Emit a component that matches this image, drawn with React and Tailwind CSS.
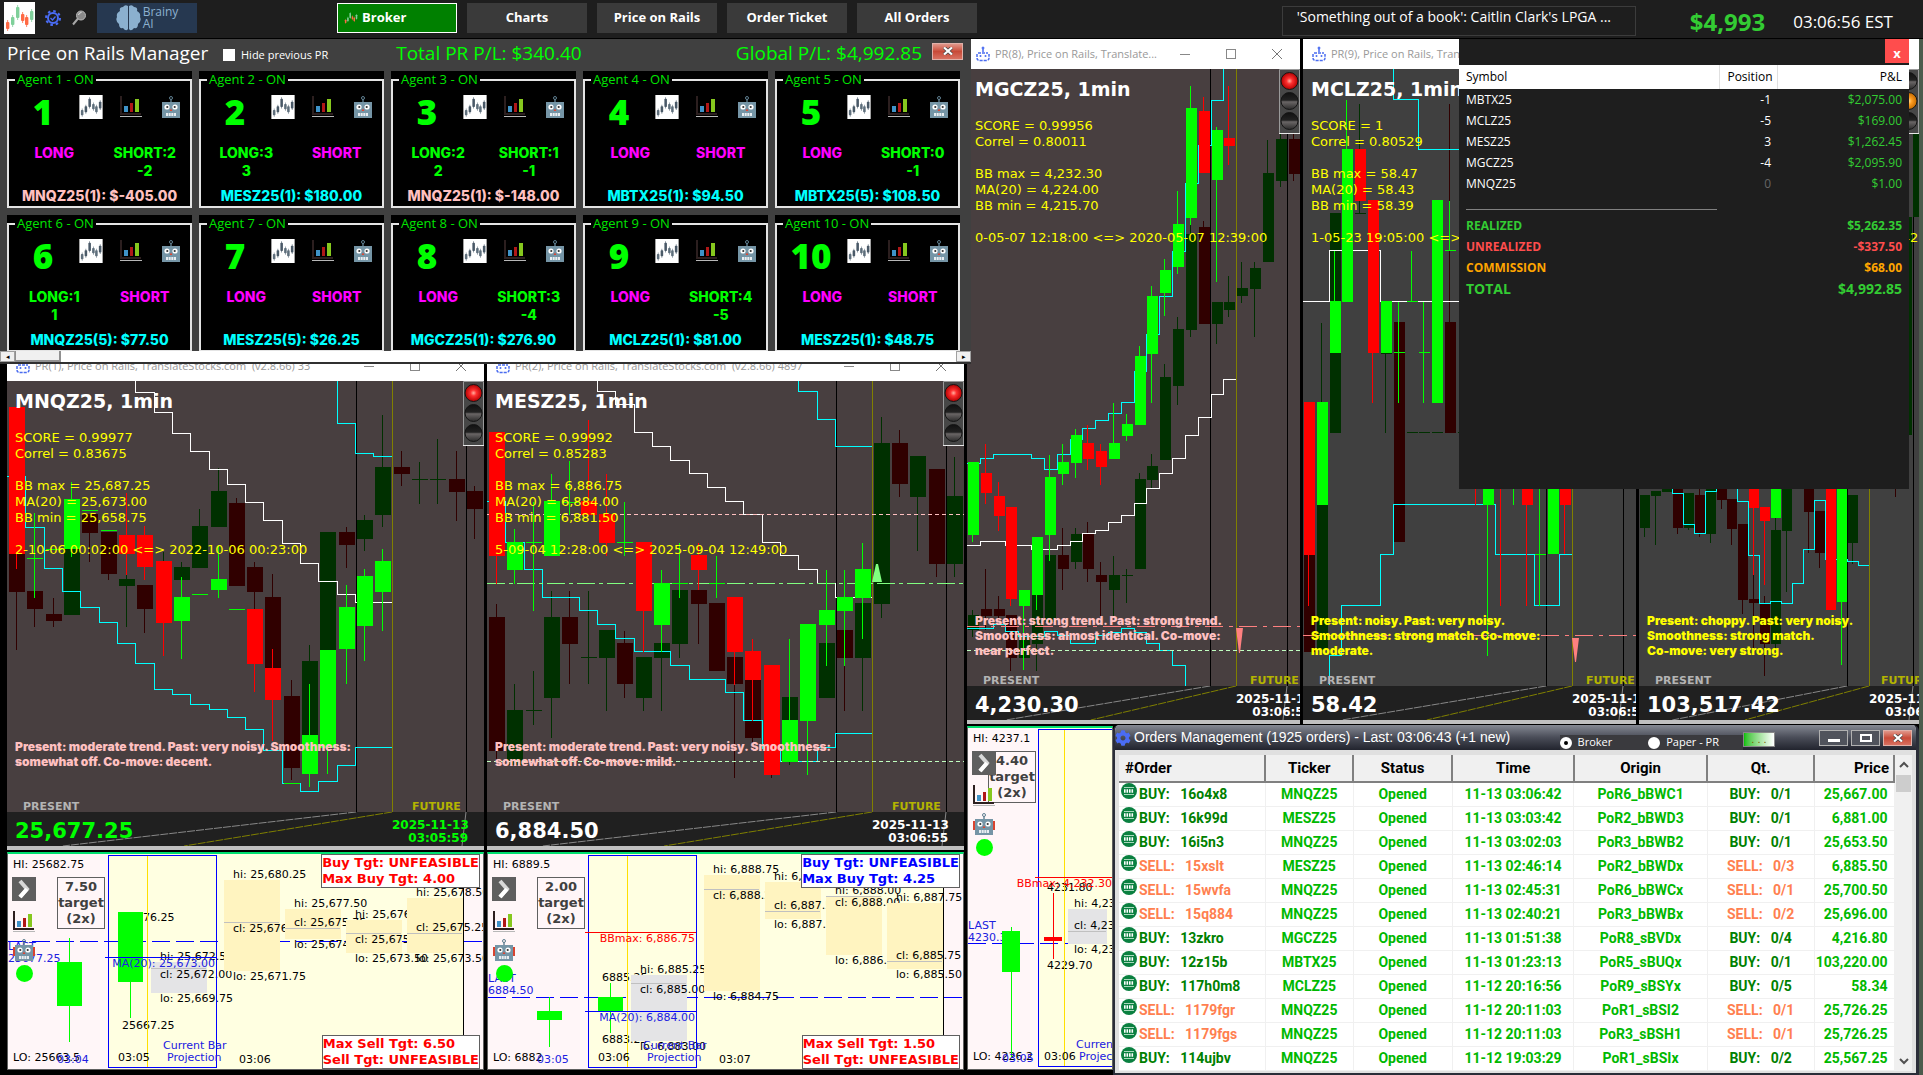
import React, { useState } from "react";
import { FaCog } from "react-icons/fa";

const PAST_UP = "#003000";
const PAST_DOWN = "#300000";
const UP = "#00ff00";
const DOWN = "#ff0000";

const TABS = ["Broker", "Charts", "Price on Rails", "Order Ticket", "All Orders"];

const AGENTS = [
  { id: 1, long: "LONG", short: "SHORT:2", longQty: "", shortQty: "-2", pl: "MNQZ25(1): $-405.00", loss: true },
  { id: 2, long: "LONG:3", short: "SHORT", longQty: "3", shortQty: "", pl: "MESZ25(1): $180.00" },
  { id: 3, long: "LONG:2", short: "SHORT:1", longQty: "2", shortQty: "-1", pl: "MNQZ25(1): $-148.00", loss: true },
  { id: 4, long: "LONG", short: "SHORT", longQty: "", shortQty: "", pl: "MBTX25(1): $94.50" },
  { id: 5, long: "LONG", short: "SHORT:0", longQty: "", shortQty: "-1", pl: "MBTX25(5): $108.50" },
  { id: 6, long: "LONG:1", short: "SHORT", longQty: "1", shortQty: "", pl: "MNQZ25(5): $77.50" },
  { id: 7, long: "LONG", short: "SHORT", longQty: "", shortQty: "", pl: "MESZ25(5): $26.25" },
  { id: 8, long: "LONG", short: "SHORT:3", longQty: "", shortQty: "-4", pl: "MGCZ25(1): $276.90" },
  { id: 9, long: "LONG", short: "SHORT:4", longQty: "", shortQty: "-5", pl: "MCLZ25(1): $81.00" },
  { id: 10, long: "LONG", short: "SHORT", longQty: "", shortQty: "", pl: "MESZ25(1): $48.75" },
];

const POSITIONS = [
  ["MBTX25", "-1", "$2,075.00"],
  ["MCLZ25", "-5", "$169.00"],
  ["MESZ25", "3", "$1,262.45"],
  ["MGCZ25", "-4", "$2,095.90"],
  ["MNQZ25", "0", "$1.00"],
];

const ORDERS = [
  ["BUY", "16o4x8", "MNQZ25", "11-13 03:06:42", "PoR6_bBWC1", "0/1", "25,667.00"],
  ["BUY", "16k99d", "MESZ25", "11-13 03:03:42", "PoR2_bBWD3", "0/1", "6,881.00"],
  ["BUY", "16i5n3", "MNQZ25", "11-13 03:02:03", "PoR3_bBWB2", "0/1", "25,653.50"],
  ["SELL", "15xslt", "MESZ25", "11-13 02:46:14", "PoR2_bBWDx", "0/3", "6,885.50"],
  ["SELL", "15wvfa", "MNQZ25", "11-13 02:45:31", "PoR6_bBWCx", "0/1", "25,700.50"],
  ["SELL", "15q884", "MNQZ25", "11-13 02:40:21", "PoR3_bBWBx", "0/2", "25,696.00"],
  ["BUY", "13zkro", "MGCZ25", "11-13 01:51:38", "PoR8_sBVDx", "0/4", "4,216.80"],
  ["BUY", "12z15b", "MBTX25", "11-13 01:23:13", "PoR5_sBUQx", "0/1", "103,220.00"],
  ["BUY", "117h0m8", "MCLZ25", "11-12 20:16:56", "PoR9_sBSYx", "0/5", "58.34"],
  ["SELL", "1179fgr", "MNQZ25", "11-12 20:11:03", "PoR1_sBSI2", "0/1", "25,726.25"],
  ["SELL", "1179fgs", "MNQZ25", "11-12 20:11:03", "PoR3_sBSH1", "0/1", "25,726.25"],
  ["BUY", "114ujbv", "MNQZ25", "11-12 19:03:29", "PoR1_sBSIx", "0/2", "25,567.25"],
];

// candles are [index, high, bodyTop, bodyBottom, low]; steps are [firstIndex, startY, ...levels]
const CHARTS = {
  mnq: {
    title: "PR(1), Price on Rails, TranslateStocks.com  (v2.8.66) 33",
    symbol: "MNQZ25, 1min",
    info: ["SCORE = 0.99977", "Correl = 0.83675", "", "BB max = 25,687.25", "MA(20) = 25,673.00", "BB min = 25,658.75", "", "2-10-06 00:02:00 <=> 2022-10-06 00:23:00"],
    note: ["Present: moderate trend. Past: very noisy. Smoothness:", "somewhat off. Co-move: decent."],
    price: "25,677.25",
    time: "03:05:59",
    pitch: 18.32,
    first: 2,
    body: 16,
    now: 349,
    future: 385,
    end: 459,
    futureLabel: 405,
    fresh: true,
    pastUp: [
      [3, 168, 168, 234, 234], [6, 194, 198, 205, 246], [8, 171, 180, 190, 190], [9, 181, 186, 199, 199],
      [10, 128, 145, 187, 187], [11, 87, 110, 146, 146], [16, 264, 280, 354, 354], [17, 151, 151, 269, 269],
      [19, 134, 139, 158, 170], [20, 34, 86, 134, 146], [22, 81, 98, 98, 123], [23, 58, 98, 98, 123],
    ],
    pastDown: [
      [0, 173, 173, 211, 269], [1, 210, 210, 228, 246], [2, 217, 233, 240, 246], [4, 133, 133, 152, 181],
      [5, 151, 151, 193, 199], [7, 204, 204, 228, 252], [12, 117, 122, 205, 205], [13, 181, 186, 211, 228],
      [14, 193, 216, 287, 287], [15, 299, 315, 387, 399], [18, 146, 151, 164, 187], [21, 70, 86, 93, 105],
      [24, 70, 98, 111, 140], [25, 105, 110, 128, 158],
    ],
    up: [
      [1, 132, 177, 177, 217], [2, 168, 168, 168, 168], [3, 101, 118, 168, 176], [4, 129, 129, 129, 129],
      [5, 149, 149, 149, 149], [9, 196, 216, 240, 278], [10, 213, 213, 213, 213], [11, 165, 198, 209, 217],
      [12, 228, 228, 228, 228], [15, 402, 402, 402, 402], [16, 303, 354, 393, 406], [17, 269, 269, 367, 393],
      [18, 204, 226, 268, 303], [19, 188, 195, 245, 280], [20, 168, 180, 211, 250],
    ],
    down: [
      [0, 26, 26, 173, 188], [6, 112, 154, 173, 194], [7, 145, 154, 186, 199], [8, 180, 180, 242, 275],
      [13, 228, 228, 283, 311], [14, 268, 287, 319, 360],
    ],
    cyan: [
      [0, 95, 95, 146, 187, 210, 226, 241, 262, 282, 308, 313, 323, 328, 336, 348, 369, 402, 410, 400, 384, 366, 366],
      [18, 0, 42, 72, 75],
    ],
    white: [[7, 0, 11, 31, 52, 70, 88, 103, 121, 139, 162, 182, 200, 213, 221, 221]],
    levels: [],
  },
  mes: {
    title: "PR(2), Price on Rails, TranslateStocks.com  (v2.8.66) 4897",
    symbol: "MESZ25, 1min",
    info: ["SCORE = 0.99992", "Correl = 0.85283", "", "BB max = 6,886.75", "MA(20) = 6,884.00", "BB min = 6,881.50", "", "5-09-04 12:28:00 <=> 2025-09-04 12:49:00"],
    note: ["Present: moderate trend. Past: very noisy. Smoothness:", "somewhat off. Co-move: mild."],
    price: "6,884.50",
    time: "03:06:55",
    pitch: 18.32,
    first: 2,
    body: 16,
    now: 349,
    future: 385,
    end: 459,
    futureLabel: 405,
    pastUp: [
      [1, 303, 329, 384, 384], [2, 290, 329, 329, 344], [3, 210, 236, 317, 357], [5, 210, 276, 276, 303],
      [6, 249, 249, 277, 330], [8, 276, 276, 317, 330], [9, 262, 262, 277, 330], [10, 209, 209, 263, 277],
      [16, 316, 316, 339, 384], [18, 262, 262, 317, 317], [20, 222, 222, 277, 330], [21, 36, 62, 223, 237],
      [23, 75, 75, 116, 170], [25, 76, 115, 183, 196],
    ],
    pastDown: [
      [0, 223, 236, 370, 379], [4, 210, 236, 263, 303], [7, 250, 262, 303, 317], [11, 209, 209, 223, 263],
      [12, 222, 222, 290, 290], [13, 276, 276, 303, 397], [14, 299, 299, 357, 370], [15, 380, 380, 390, 397],
      [19, 249, 249, 277, 330], [22, 49, 62, 103, 116], [24, 88, 88, 183, 196],
    ],
    up: [
      [1, 148, 161, 189, 203], [2, 121, 161, 161, 230], [3, 93, 120, 175, 175], [4, 80, 121, 121, 134],
      [7, 121, 161, 161, 175], [9, 189, 202, 244, 271], [10, 162, 202, 202, 217], [12, 175, 202, 202, 217],
      [16, 258, 339, 381, 381], [17, 243, 243, 340, 394], [18, 189, 229, 244, 285], [19, 189, 216, 230, 285],
      [20, 162, 188, 217, 258],
    ],
    down: [
      [0, 51, 51, 175, 203], [5, 39, 120, 134, 134], [6, 93, 133, 162, 175], [8, 161, 161, 230, 271],
      [11, 162, 174, 189, 209], [13, 216, 216, 271, 304], [14, 258, 270, 299, 340], [15, 284, 284, 394, 394],
    ],
    cyan: [
      [0, 120, 120, 161, 188, 216, 216, 229, 243, 257, 270, 270, 284, 298, 298, 311, 339, 367, 380, 380, 366, 352, 352],
      [17, 0, 10, 38, 65, 65],
    ],
    white: [[6, 0, 10, 23, 51, 65, 79, 92, 106, 120, 133, 161, 174, 188, 202, 216, 216]],
    levels: [
      [133, "#ffc0c0", "4 3"],
      [202, "#80ff80", "18 4 4 4"],
      [380, "#c0ffc0", "4 3"],
    ],
    marker: { points: "385,201 389,183 391,183 395,201", color: "#80ff80" },
  },
  mgc: {
    title: "PR(8), Price on Rails, Translate...",
    symbol: "MGCZ25, 1min",
    info: ["SCORE = 0.99956", "Correl = 0.80011", "", "BB max = 4,232.30", "MA(20) = 4,224.00", "BB min = 4,215.70", "", "0-05-07 12:18:00 <=> 2020-05-07 12:39:00"],
    note: ["Present: strong trend. Past: strong trend.", "Smoothness: almost identical. Co-move:", "near perfect."],
    price: "4,230.30",
    time: "03:06:56",
    pitch: 12.82,
    first: 1,
    body: 11,
    now: 243,
    future: 269,
    end: 320,
    futureLabel: 283,
    pastUp: [
      [0, 541, 546, 561, 568], [4, 567, 567, 589, 589], [5, 526, 526, 575, 602], [6, 486, 486, 553, 553],
      [8, 459, 465, 493, 500], [11, 487, 506, 521, 548], [12, 500, 506, 506, 534], [13, 404, 410, 500, 500],
      [14, 385, 397, 411, 419], [15, 295, 308, 391, 391], [16, 248, 260, 317, 336], [17, 156, 165, 261, 268],
      [19, 233, 233, 255, 275], [20, 207, 233, 241, 248], [21, 193, 219, 227, 234], [22, 193, 199, 220, 268],
      [23, 71, 104, 193, 193], [24, 64, 70, 112, 118],
    ],
    pastDown: [
      [1, 500, 540, 547, 561], [2, 527, 540, 547, 551], [3, 546, 546, 589, 602], [7, 459, 486, 500, 521],
      [9, 453, 465, 500, 513], [10, 493, 506, 513, 548], [18, 152, 158, 255, 255], [25, 64, 70, 105, 112],
    ],
    up: [
      [0, 393, 393, 466, 473], [4, 521, 521, 537, 601], [5, 468, 468, 526, 541], [6, 386, 408, 466, 492],
      [7, 375, 393, 405, 416], [8, 360, 366, 394, 409], [11, 334, 374, 390, 390], [12, 345, 355, 367, 372],
      [13, 277, 287, 356, 356], [14, 217, 227, 285, 334], [15, 190, 201, 224, 247], [16, 122, 155, 198, 205],
      [17, 17, 39, 149, 156], [19, 58, 61, 111, 213],
    ],
    down: [
      [1, 375, 404, 424, 435], [2, 413, 427, 447, 462], [3, 438, 438, 530, 537], [9, 356, 374, 390, 401],
      [10, 375, 382, 398, 416], [18, 28, 42, 104, 104], [20, 17, 69, 77, 96],
    ],
    cyan: [
      [0, 394, 394, 389, 385, 385, 385, 389, 400, 385, 370, 359, 351, 344, 333, 302, 265, 227, 182, 114, 76, 31, -1],
      [0, 559, 559, 559, 555, 562, 567, 567, 562, 566, 574, 574, 566, 563, 559, 563, 574, 581, 596, 618],
    ],
    white: [[0, 476, 476, 472, 472, 476, 476, 480, 480, 476, 472, 464, 461, 453, 446, 434, 419, 404, 389, 366, 348, 325, 310]],
    levels: [
      [557, "#ff8080", "18 6 4 6"],
      [581, "#c0ffc0", "4 3"],
    ],
    marker: { points: "269,559 276,559 273,584 272,584", color: "#ff8080" },
  },
  mcl: {
    title: "PR(9), Price on Rails, Translate...",
    symbol: "MCLZ25, 1min",
    info: ["SCORE = 1", "Correl = 0.80529", "", "BB max = 58.47", "MA(20) = 58.43", "BB min = 58.39", "", "1-05-23 19:05:00 <=> 2021-05-23 19:26:00"],
    note: ["Present: noisy. Past: very noisy.", "Smoothness: strong match. Co-move:", "moderate."],
    price: "58.42",
    time: "03:06:56",
    pitch: 12.82,
    first: 1,
    body: 11,
    now: 243,
    future: 269,
    end: 320,
    futureLabel: 283,
    neutral: true,
    pastUp: [
      [1, 254, 436, 581, 581], [2, 144, 144, 364, 364], [4, 35, 144, 144, 144], [6, 284, 284, 285, 364],
      [8, 363, 363, 363, 363], [9, 363, 363, 363, 363], [10, 363, 363, 363, 363], [12, 363, 363, 363, 363],
    ],
    pastDown: [[0, 486, 486, 583, 583], [7, 253, 253, 473, 473], [11, 35, 253, 364, 364]],
    up: [
      [1, 333, 333, 436, 436], [2, 182, 232, 284, 284], [3, 31, 80, 233, 233], [6, 232, 232, 284, 284],
      [7, 233, 283, 283, 334], [8, 182, 232, 232, 232], [9, 233, 283, 283, 334], [10, 131, 131, 334, 334],
      [11, 132, 181, 181, 181], [14, 380, 380, 436, 587], [16, 380, 380, 380, 436], [18, 380, 485, 485, 537],
      [19, 380, 380, 485, 485],
    ],
    down: [
      [0, 333, 333, 486, 537], [4, 80, 80, 132, 132], [5, 131, 131, 284, 334], [13, 380, 380, 380, 436],
      [15, 380, 380, 380, 537], [17, 380, 380, 436, 537], [20, 380, 380, 436, 485],
    ],
    cyan: [
      [7, 0, 30, 30, 80, 80, 80, 80],
      [2, 616, 586, 536, 536, 536, 485, 435, 435, 435, 435, 435, 435, 435, 435, 485, 485, 485, 536, 536, 485],
    ],
    white: [[0, 232, 232, 232, 181, 181, 181, 181, 232, 232, 232, 232, 232, 232, 232]],
    levels: [[566, "#ff8080", "18 6 4 6"]],
    marker: { points: "269,569 276,569 273,593 272,593", color: "#ff8080" },
  },
  mbt: {
    title: "PR(10), Price on Rails, Translate...",
    symbol: "MBTX25, 1min",
    info: ["SCORE = 0.99981", "Correl = 0.81204", "", "BB max = 103,590", "MA(20) = 103,535", "BB min = 103,480", "", "3-02-14 08:21:00 <=> 2023-02-14 08:42:00"],
    note: ["Present: choppy. Past: very noisy.", "Smoothness: strong match.", "Co-move: very strong."],
    price: "103,517.42",
    time: "03:06:56",
    pitch: 10.93,
    first: 1,
    body: 10,
    now: 208,
    future: 230,
    end: 274,
    futureLabel: 242,
    neutral: true,
    amber: true,
    pastUp: [
      [0, 426, 426, 459, 468], [1, 422, 422, 427, 476], [2, 414, 414, 423, 423], [4, 424, 424, 459, 461],
      [6, 414, 414, 465, 474], [12, 449, 461, 575, 581], [13, 414, 414, 462, 523], [19, 426, 426, 474, 495],
      [24, 148, 148, 366, 366], [25, 65, 65, 148, 148],
    ],
    pastDown: [
      [3, 414, 414, 459, 465], [5, 414, 426, 464, 468], [7, 414, 414, 431, 440], [8, 430, 430, 460, 476],
      [9, 455, 455, 531, 545], [10, 506, 530, 534, 581], [11, 527, 534, 575, 607], [15, 414, 414, 443, 484],
      [16, 442, 442, 484, 499], [23, 400, 400, 410, 428],
    ],
    up: [[12, 414, 414, 449, 449], [18, 414, 414, 533, 596]],
    down: [[10, 414, 414, 439, 506], [11, 438, 438, 452, 516], [17, 414, 414, 541, 541]],
    cyan: [
      [3, 400, 424, 455, 464, 422, 400, 400, 432, 486, 534, 532, 534, 514, 480, 431, 490, 490, 492, 496],
    ],
    white: [],
    levels: [],
  },
};

const SLOT_X = [217, 278, 339, 400];

const PROJECTIONS = {
  mnq: {
    hi: "HI: 25682.75",
    lo: "LO: 25663.5",
    target: "7.50",
    last: ["25677.25", 98, 89],
    prev: { x: 50, w: 25, high: 86, top: 110, bottom: 154, low: 190, color: UP, time: "03:04" },
    cur: { x: 111, w: 25, high: 60, top: 60, bottom: 130, low: 166, color: UP, time: "03:05" },
    curHigh: ["25676.25", 69],
    curLow: ["25667.25", 177],
    box: [101, 108, 140],
    ma: ["MA(20): 25,673.00", 105, 115],
    gray: { x: 144, w: 56, top: 110, bottom: 141, close: 116, hi: "hi: 25,672.5", cl: "cl: 25,672.00", lo: "lo: 25,669.75", text: [108, 126, 150] },
    slots: [
      { top: 28, bottom: 119, close: 70, hi: "hi: 25,680.25", cl: "cl: 25,676.25", lo: "lo: 25,671.75", text: [26, 80, 128] },
      { top: 57, bottom: 87, close: 76, hi: "hi: 25,677.50", cl: "cl: 25,675.75", lo: "lo: 25,674.75", text: [55, 74, 96] },
      { top: 68, bottom: 101, close: 81, hi: "hi: 25,676.50", cl: "cl: 25,675.25", lo: "lo: 25,673.50", text: [66, 91, 110] },
      { top: 46, bottom: 101, close: 81, hi: "hi: 25,678.50", cl: "cl: 25,675.25", lo: "lo: 25,673.50", text: [44, 79, 110] },
    ],
    next: "03:06",
    buy: ["Buy Tgt: UNFEASIBLE", "Max Buy Tgt: 4.00"],
    sell: ["Max Sell Tgt: 6.50", "Sell Tgt: UNFEASIBLE"],
    height: 218,
  },
  mes: {
    hi: "HI: 6889.5",
    lo: "LO: 6882",
    target: "2.00",
    last: ["6884.50", 130, 145],
    prev: { x: 50, w: 25, high: 145, top: 159, bottom: 168, low: 195, color: UP, time: "03:05" },
    cur: { x: 111, w: 25, high: 131, top: 145, bottom: 159, low: 181, color: UP, time: "03:06" },
    curHigh: ["6885.25", 129],
    curLow: ["6883.25", 191],
    box: [101, 108, 140],
    bb: ["BBmax: 6,886.75", 80, 90],
    ma: ["MA(20): 6,884.00", 159, 169],
    gray: { x: 144, w: 56, top: 123, bottom: 189, close: 131, hi: "hi: 6,885.25", cl: "cl: 6,885.00", lo: "lo: 6,883.00", text: [121, 141, 198] },
    slots: [
      { top: 23, bottom: 139, close: 37, hi: "hi: 6,888.75", cl: "cl: 6,888.25", lo: "lo: 6,884.75", text: [21, 47, 148] },
      { top: 30, bottom: 67, close: 59, hi: "hi: 6,888.50", cl: "cl: 6,887.50", lo: "lo: 6,887.25", text: [28, 57, 76] },
      { top: 44, bottom: 103, close: 44, hi: "hi: 6,888.00", cl: "cl: 6,888.00", lo: "lo: 6,886.00", text: [42, 54, 112] },
      { top: 51, bottom: 117, close: 109, hi: "hi: 6,887.75", cl: "cl: 6,885.75", lo: "lo: 6,885.50", text: [49, 107, 126] },
    ],
    next: "03:07",
    buy: ["Buy Tgt: UNFEASIBLE", "Max Buy Tgt: 4.25"],
    sell: ["Max Sell Tgt: 1.50", "Sell Tgt: UNFEASIBLE"],
    buyBlue: true,
    height: 218,
  },
  mgc: {
    hi: "HI: 4237.1",
    lo: "LO: 4226.2",
    target: "4.40",
    last: ["4230.30", 203, 217],
    prev: { x: 35, w: 18, high: 201, top: 205, bottom: 246, low: 331, color: UP, time: "03:05" },
    cur: { x: 77, w: 18, high: 167, top: 211, bottom: 215, low: 233, color: DOWN, time: "03:06" },
    curHigh: ["4231.80", 165],
    curLow: ["4229.70", 243],
    box: [71, 108, 97],
    bb: ["BBmax: 4,232.30", 151, 161],
    gray: { x: 101, w: 39, top: 183, bottom: 218, close: 205, hi: "hi: 4,231.40", cl: "cl: 4,230.40", lo: "lo: 4,230.00", text: [181, 203, 227] },
    slots: [],
    narrow: true,
    height: 343,
  },
};

function CandlesIcon({ className, up, down, bg }) {
  const bars = [
    [2, 20, 27, down], [7, 15, 23, up], [12, 5, 16, up], [17, 12, 19, down], [21, 15, 23, down], [26, 9, 18, up],
  ];
  return (
    <svg className={className} viewBox="0 0 31 32" aria-hidden="true">
      <rect width="31" height="32" fill={bg} />
      {bars.map(([x, top, bottom, color]) => (
        <g key={x} fill={color}>
          <rect x={x} y={top} width="3.4" height={bottom - top} rx="1" />
          <rect x={x + 1.3} y={top - 2} width="0.8" height={bottom - top + 4} />
        </g>
      ))}
    </svg>
  );
}

function BarsIcon({ className }) {
  return (
    <svg className={className} viewBox="0 0 22 22" aria-hidden="true">
      <path d="M1 0V18H21" fill="none" stroke="#2c1f1f" strokeWidth="2" />
      <rect x="4" y="10" width="4" height="6" fill="#3f93c8" />
      <rect x="10" y="7" width="3" height="9" fill="#b01818" />
      <rect x="15" y="3" width="4" height="13" fill="#86c81e" />
      <rect x="0" y="20" width="22" height="1" fill="#b8b8b8" />
    </svg>
  );
}

function RobotIcon({ className, ears }) {
  return (
    <svg className={className} viewBox="0 0 22 22" aria-hidden="true">
      {ears && <rect x="0" y="8" width="22" height="9" fill="#d8432f" />}
      <circle cx="11" cy="2" r="1.5" fill="none" stroke="#5f7f90" />
      <path d="M11 3V6" stroke="#5f7f90" strokeWidth="1.4" />
      <rect x="2" y="6" width="18" height="16" fill="#7595a6" />
      <circle cx="7" cy="11" r="2.6" fill="#fff" />
      <circle cx="15" cy="11" r="2.6" fill="#fff" />
      <circle cx="7.3" cy="11" r="1.1" fill="#333" />
      <circle cx="14.7" cy="11" r="1.1" fill="#333" />
      <path d="M11 12.5l1.4 2.4H9.600z" fill="#e0442f" />
      <rect x="6" y="17" width="10" height="3" fill="#e8eef2" />
      <path d="M8.500 17V20M11 17V20M13.500 17V20" stroke="#7595a6" strokeWidth="0.600" />
    </svg>
  );
}

function WindowIcon() {
  return (
    <svg className="h-4 w-4 shrink-0" viewBox="0 0 16 16" fill="none" stroke="#4a6cf0" aria-hidden="true">
      <circle cx="8" cy="2" r="1" fill="#4a6cf0" />
      <path d="M8 3V6" strokeWidth="1.500" />
      <path d="M3 7h10M2 8v4q0 2.500 3 2.500h6q3 0 3-2.500V8" strokeWidth="1.500" strokeDasharray="3 1" />
      <circle cx="5.500" cy="10" r="1" fill="#4a6cf0" stroke="none" />
      <circle cx="10.500" cy="10" r="1" fill="#4a6cf0" stroke="none" />
    </svg>
  );
}

function RedClose({ className }) {
  return (
    <button
      aria-label="Close"
      className={`${className} flex items-center justify-center border border-[#e0b0a8] bg-gradient-to-b from-[#e0968a] via-[#c84a38] to-[#d87060]`}
    >
      <svg className="h-2 w-3" viewBox="0 0 12 8" aria-hidden="true">
        <path d="M2 0.500L10 7.500M10 0.500L2 7.500" stroke="#444" strokeWidth="3.600" />
        <path d="M2 0.500L10 7.500M10 0.500L2 7.500" stroke="#fff" strokeWidth="2.200" />
      </svg>
    </button>
  );
}

function TopBar() {
  const [tab, setTab] = useState("Broker");
  return (
    <header className="flex h-[39px] shrink-0 items-start border-b border-black bg-[#1e1e1e] pl-1 font-['Open_Sans',sans-serif]">
      <CandlesIcon className="mt-0.5 h-8 w-[31px]" up="#7fd09a" down="#ff6a45" bg="#fff" />
      <button aria-label="Settings" className="mt-2.5 ml-2.5">
        <svg className="h-4 w-4" viewBox="0 0 16 16" aria-hidden="true">
          <circle cx="8" cy="8" r="5" fill="none" stroke="#4a6cf5" strokeWidth="2" />
          <circle cx="8" cy="8" r="7" fill="none" stroke="#4a6cf5" strokeWidth="2" strokeDasharray="2.600 2.900" />
          <path d="M5.500 8l2 2 3-3.500" fill="none" stroke="#4a6cf5" strokeWidth="1.300" />
        </svg>
      </button>
      <button aria-label="Search" className="mt-2.5 ml-2.5">
        <svg className="h-4 w-4" viewBox="0 0 16 16" aria-hidden="true">
          <path d="M2 14.500L7 8.500" stroke="#a8a8a8" strokeWidth="2" />
          <circle cx="10" cy="5.500" r="4.500" fill="#8a8a8a" stroke="#b8b8b8" />
          <path d="M7.500 5a3 3 0 0 1 3-2.500" stroke="#e0e0e0" fill="none" />
        </svg>
      </button>
      <button className="mt-[3px] ml-2.5 flex h-[30px] w-[100px] items-center justify-center gap-0.5 bg-[#263850] text-left text-[12px] leading-3 text-[#8bb0cf]">
        <svg className="h-[26px] w-[25px]" viewBox="0 0 25 26" fill="#8bb0cf" aria-hidden="true">
          <path d="M12 1Q9-1 7 2Q3 2 4 6Q0 8 1 12Q-1 16 3 19Q3 24 7 23Q10 27 12 24Z" />
          <path d="M13 1Q16-1 18 2Q22 2 21 6Q25 8 24 12Q26 16 22 19Q22 24 18 23Q15 27 13 24Z" />
        </svg>
        <span>
          Brainy
          <br />
          AI
        </span>
      </button>
      <nav className="mt-[3px] ml-[140px] flex gap-2.5">
        {TABS.map((name) => (
          <button
            key={name}
            onClick={() => setTab(name)}
            className={`flex h-[30px] w-[120px] items-center gap-1 text-[13px] font-bold text-white ${
              tab === name ? "border border-white bg-[#008000] pl-1.5" : "justify-center bg-[#3a3a3a]"
            }`}
          >
            {tab === name && <CandlesIcon className="h-4 w-3.5" up="#7fd09a" down="#ff6a45" bg="transparent" />}
            {name}
          </button>
        ))}
      </nav>
      <div className="mt-1.5 ml-auto h-[30px] w-[354px] border border-[#3c3c3c] pt-0.5 pl-3.5 text-[14px] leading-4 text-white">
        'Something out of a book': Caitlin Clark's LPGA ...
      </div>
      <span className="mt-1.5 ml-[54px] text-[24px] leading-8 font-bold text-[#33cc33]">$4,993</span>
      <span className="mt-1.5 mr-[30px] ml-[28px] text-[17px] leading-8 text-white">03:06:56 EST</span>
    </header>
  );
}

function AgentCard({ agent }) {
  const side = (label) => (label.includes(":") ? "text-[#00ff00]" : "text-[#ff00ff]");
  return (
    <div className="h-[137px] bg-black">
      <fieldset className="h-full border-2 border-[#e4e4e4]">
        <legend className="ml-1.5 px-0.5 font-['Open_Sans',sans-serif] text-[13px] leading-[17px] text-[#00e400]">
          Agent {agent.id} - ON
        </legend>
        <div className="flex h-9 pt-[7px] pl-1">
          <div className="w-[60px] text-center font-['Open_Sans',sans-serif] text-[35px] leading-[34px] font-extrabold text-[#00ff00]">
            {agent.id}
          </div>
          <button aria-label="Chart" className="ml-1.5 h-6 w-6">
            <CandlesIcon className="h-6 w-6" up="#4a5a68" down="#5f6f7c" bg="#fff" />
          </button>
          <button aria-label="Statistics" className="ml-[17px] h-6 w-[22px]">
            <BarsIcon className="h-[22px] w-[22px]" />
          </button>
          <button aria-label="Robot" className="ml-[18px] h-6 w-[22px]">
            <RobotIcon className="h-[22px] w-[22px]" />
          </button>
        </div>
        <div className="mt-5 grid grid-cols-2 text-center font-['Inter',sans-serif] text-[14px] leading-[18px] font-extrabold text-[#00ff00]">
          <div className={side(agent.long)}>{agent.long}</div>
          <div className={side(agent.short)}>{agent.short}</div>
          <div className="h-[18px]">{agent.longQty}</div>
          <div className="h-[18px]">{agent.shortQty}</div>
        </div>
        <div
          className={`mt-[7px] text-center font-['Inter',sans-serif] text-[14px] leading-[18px] font-extrabold ${
            agent.loss ? "text-[#ffc0c0]" : "text-[#00ffff]"
          }`}
        >
          {agent.pl}
        </div>
      </fieldset>
    </div>
  );
}

function Manager() {
  return (
    <section className="relative z-10 -mr-1 shrink-0 border-b-2 border-[#303030] bg-[#404040] font-['Open_Sans',sans-serif]">
      <div className="flex h-8 items-center pr-2 pb-1 pl-[7px]">
        <h1 className="w-[216px] text-[19px] leading-7 text-white">Price on Rails Manager</h1>
        <label className="mt-1 flex items-center gap-1.5 text-[11px] text-white">
          <input type="checkbox" className="h-3 w-3 appearance-none bg-white checked:bg-gray-500" />
          Hide previous PR
        </label>
        <span className="ml-[68px] text-[19px] leading-7 text-[#00ff00]">Total PR P/L: $340.40</span>
        <span className="ml-auto text-[19px] leading-7 text-[#00ff00]">Global P/L: $4,992.85</span>
        <RedClose className="mb-1 ml-2.5 h-[17px] w-[31px]" />
      </div>
      <div className="grid h-[280px] grid-cols-5 content-start gap-[7px] overflow-hidden pr-[11px] pl-[7px]">
        {AGENTS.map((agent) => (
          <AgentCard key={agent.id} agent={agent} />
        ))}
      </div>
      <div className="flex h-[11px] bg-white">
        <button aria-label="Scroll left" className="flex w-[15px] items-center justify-center border border-[#a0a0a0] bg-[#f0f0f0] text-[7px] leading-none">
          ◂
        </button>
        <div className="h-full w-[46px] border-r-2 border-b-2 border-l border-[#909090] bg-[#f0f0f0]" />
        <button aria-label="Scroll right" className="ml-auto flex w-[15px] items-center justify-center border border-[#a0a0a0] bg-[#f0f0f0] text-[7px] leading-none">
          ▸
        </button>
      </div>
    </section>
  );
}

function Candles({ rows, color, chart }) {
  return (
    <g fill={color} shapeRendering="crispEdges">
      {rows.map(([i, high, top, bottom, low]) => {
        const x = Math.round(chart.first + chart.pitch * i);
        return (
          <g key={i}>
            <rect x={x} y={top} width={chart.body} height={Math.max(bottom - top, 1)} />
            <rect x={x + Math.floor(chart.body / 2) - 1} y={high} width="1" height={low - high} />
          </g>
        );
      })}
    </g>
  );
}

function stepPath([first, startY, ...levels], pitch) {
  let d = `M${Math.round(first * pitch)} ${startY}`;
  levels.forEach((y, n) => {
    d += `V${y}H${Math.round((first + n + 1) * pitch)}`;
  });
  return d;
}

function Steps({ rows, color, pitch }) {
  return rows.map((row, n) => (
    <path key={n} d={stepPath(row, pitch)} fill="none" stroke={color} strokeWidth="1" shapeRendering="crispEdges" />
  ));
}

function TrafficLight({ amber }) {
  return (
    <svg className="absolute top-0 right-0 h-[65px] w-[21px]" viewBox="0 0 21 65" aria-hidden="true">
      <defs>
        <linearGradient id="lamp-off" x1="0" y1="0" x2="0" y2="1">
          <stop offset="0" stopColor="#111" />
          <stop offset="0.450" stopColor="#222" />
          <stop offset="0.550" stopColor="#6a6666" />
          <stop offset="1" stopColor="#2a2a2a" />
        </linearGradient>
        <radialGradient id="lamp-red">
          <stop offset="0" stopColor="#ffb0a0" />
          <stop offset="0.350" stopColor="#ff3030" />
          <stop offset="1" stopColor="#b00000" />
        </radialGradient>
        <radialGradient id="lamp-amber">
          <stop offset="0" stopColor="#ffe0a0" />
          <stop offset="0.400" stopColor="#ff9c20" />
          <stop offset="1" stopColor="#c06800" />
        </radialGradient>
      </defs>
      <rect width="21" height="65" fill="#474747" />
      <path d="M0.500 65V0.500H20.500V65" fill="none" stroke="#9a9a9a" />
      <rect y="64" width="21" height="1" fill="#e8e8e8" />
      <circle cx="10.500" cy="12" r="8.500" fill={amber ? "url(#lamp-off)" : "url(#lamp-red)"} stroke="#151515" />
      <circle cx="10.500" cy="32" r="8.500" fill={amber ? "url(#lamp-amber)" : "url(#lamp-off)"} stroke="#151515" />
      <circle cx="10.500" cy="52" r="8.500" fill="url(#lamp-off)" stroke="#151515" />
    </svg>
  );
}

function ChartWindow({ chart, tucked }) {
  return (
    <section
      className={`flex min-w-0 flex-col overflow-hidden border-b-4 border-[#c0c0c0] ${chart.neutral ? "bg-[#404040]" : "bg-[#483f40]"}`}
    >
      <div className={`flex shrink-0 items-end overflow-hidden bg-white ${tucked ? "h-[17px]" : "h-[30px]"}`}>
        <div className="flex h-[30px] w-full shrink-0 items-center pl-2 font-['Open_Sans',sans-serif] text-[11px] text-[#999]">
          <WindowIcon />
          <span className="ml-1 flex-1 overflow-hidden whitespace-pre">{chart.title}</span>
          <button aria-label="Minimize" className="flex h-full w-[46px] items-center justify-center">
            <span className="h-px w-2.5 bg-[#888]" />
          </button>
          <button aria-label="Maximize" className="flex h-full w-[46px] items-center justify-center">
            <span className="h-2.5 w-2.5 border border-[#888]" />
          </button>
          <button aria-label="Close" className="flex h-full w-[46px] items-center justify-center">
            <svg className="h-2.5 w-2.5" viewBox="0 0 10 10" stroke="#777" aria-hidden="true">
              <path d="M0 0L10 10M10 0L0 10" />
            </svg>
          </button>
        </div>
      </div>
      <div className="relative flex-1 overflow-hidden font-['DejaVu_Sans',sans-serif] whitespace-pre">
        <svg className="absolute inset-0 h-full w-full" aria-hidden="true">
          <g stroke="#000" shapeRendering="crispEdges">
            <line x1={chart.now} x2={chart.now} y1="0" y2="100%" />
            <line x1={chart.end} x2={chart.end} y1="0" y2="100%" />
          </g>
          <Candles rows={chart.pastUp} color={PAST_UP} chart={chart} />
          <Candles rows={chart.pastDown} color={PAST_DOWN} chart={chart} />
          <Steps rows={chart.white} color="#fff" pitch={chart.pitch} />
          <Steps rows={chart.cyan} color="#00ffff" pitch={chart.pitch} />
          <line x1={chart.future} x2={chart.future} y1="0" y2="100%" stroke="#808000" shapeRendering="crispEdges" />
          {chart.levels.map(([y, color, dash]) => (
            <line key={y} x1="0" x2="100%" y1={y} y2={y} stroke={color} strokeDasharray={dash} shapeRendering="crispEdges" />
          ))}
          <Candles rows={chart.up} color={UP} chart={chart} />
          <Candles rows={chart.down} color={DOWN} chart={chart} />
          {chart.marker && <polygon points={chart.marker.points} fill={chart.marker.color} />}
        </svg>
        <div className="relative pt-2 pl-2">
          <h2 className="text-[19px] leading-6 font-bold text-white">{chart.symbol}</h2>
          <div className="mt-[17px] text-[13px] leading-4 text-[#ffff00]">
            {chart.info.map((line, n) => (
              <div key={n} className="h-4">
                {line}
              </div>
            ))}
          </div>
        </div>
        <div
          className={`absolute bottom-0 left-2 h-[73px] font-['Inter',sans-serif] text-[12px] leading-[15px] font-black ${
            chart.neutral ? "text-[#ffff00]" : "text-[#ffc0c0]"
          }`}
        >
          {chart.note.map((line) => (
            <div key={line}>{line}</div>
          ))}
        </div>
        <span className="absolute bottom-0 left-4 text-[11px] leading-[11px] font-bold text-[#b4b4b4]">PRESENT</span>
        <span className="absolute bottom-0 text-[11px] leading-[11px] font-bold text-[#b4b400]" style={{ left: chart.futureLabel }}>
          FUTURE
        </span>
        <TrafficLight amber={chart.amber} />
      </div>
      <div
        className={`relative h-[34px] shrink-0 overflow-hidden bg-[#202020] font-['DejaVu_Sans',sans-serif] font-bold ${
          chart.fresh ? "text-[#00ff00]" : "text-white"
        }`}
      >
        <svg className="absolute inset-0 h-full w-full" aria-hidden="true">
          <line x1={chart.now} y1="0" x2={chart.now * 0.16} y2="34" stroke="#888" strokeDasharray="8 1" />
          <line x1={chart.future} y1="0" x2={chart.future * 0.46} y2="34" stroke="#808000" strokeDasharray="8 1" />
          <line x1={chart.end} y1="0" x2={chart.end - 4} y2="34" stroke="#888" />
        </svg>
        <div className="relative pt-px pl-2 text-[21px] leading-9">{chart.price}</div>
        <div className="absolute top-[7px] w-[76px] text-right text-[12px] leading-[13px] whitespace-nowrap" style={{ left: chart.future }}>
          2025-11-13
          <br />
          {chart.time}
        </div>
      </div>
    </section>
  );
}

function PriceBar({ bar }) {
  const mid = bar.x + Math.floor(bar.w / 2);
  return (
    <g fill={bar.color} shapeRendering="crispEdges">
      <rect x={mid} y={bar.high} width="1" height={bar.low - bar.high} />
      <rect x={bar.x} y={bar.top} width={bar.w} height={bar.bottom - bar.top} />
    </g>
  );
}

function Forecast({ x, w, data, fill, indent }) {
  return (
    <g>
      <rect x={x} y={data.top} width={w} height={data.bottom - data.top} fill={fill} />
      <rect x={x} y={data.close} width={w - 1} height="1" fill="#c0c0c0" />
      <text x={x + indent} y={data.text[0]}>{data.hi}</text>
      <text x={x + indent} y={data.text[1]}>{data.cl}</text>
      <text x={x + indent} y={data.text[2]}>{data.lo}</text>
    </g>
  );
}

function Projection({ data }) {
  const [boxX, boxW, marker] = data.box;
  const base = data.height - 9;
  const right = boxX + boxW;
  return (
    <section className="relative min-w-0 overflow-hidden border border-t-2 border-[#606060] border-t-[#00e070] bg-[#fff6f8] font-['DejaVu_Sans',sans-serif]">
      <svg className="absolute -top-0.5 -left-px h-[350px] w-[477px]" fontSize="11">
        <rect x={boxX} y="2" width={data.narrow ? 262 : 355} height={data.height} fill="#ffffe1" />
        <line x1="1" x2="475" y1={data.last[2]} y2={data.last[2]} stroke="#00f" strokeDasharray="18 6" shapeRendering="crispEdges" />
        <g fill="#2020e0">
          <text x="1" y={data.last[1]}>LAST</text>
          <text x="1" y={data.last[1] + 12}>{data.last[0]}</text>
        </g>
        <text x="6" y="16">{data.hi}</text>
        <text x="6" y={base}>{data.lo}</text>
        <text x={data.cur.x + (data.narrow ? 3 : 4)} y={data.curHigh[1]}>{data.curHigh[0]}</text>
        <text x={data.cur.x + (data.narrow ? 3 : 4)} y={data.curLow[1]}>{data.curLow[0]}</text>
        <Forecast x={data.gray.x} w={data.gray.w} data={data.gray} fill="#e4e4e6" indent={data.narrow ? 6 : 9} />
        {data.slots.map((slot, n) => (
          <Forecast key={n} x={SLOT_X[n]} w={56} data={slot} fill="#fff4c0" indent={9} />
        ))}
        <PriceBar bar={data.prev} />
        <PriceBar bar={data.cur} />
        <g shapeRendering="crispEdges">
          <line x1={marker} x2={marker} y1="3" y2={data.height - 3} stroke="#ffe000" />
          <rect x={boxX} y="3" width={boxW} height={data.height - 6} fill="none" stroke="#00f" />
          {data.ma && <line x1={boxX - 3} x2={right} y1={data.ma[1]} y2={data.ma[1]} stroke="#00f" />}
          {data.bb && <line x1={boxX - 3} x2={right} y1={data.bb[1]} y2={data.bb[1]} stroke="#f00" />}
          {!data.narrow && <line x1="456" x2="456" y1="2" y2={data.height} stroke="#000" />}
        </g>
        {data.ma && <text x={right - 1} y={data.ma[2]} textAnchor="end" fill="#2020e0">{data.ma[0]}</text>}
        {data.bb && <text x={data.narrow ? 145 : right - 1} y={data.bb[2]} textAnchor="end" fill="#f00">{data.bb[0]}</text>}
        <g fill="#2020e0">
          <text x={data.narrow ? 109 : 156} y={base - 12}>Current Bar</text>
          <text x={data.narrow ? 112 : 160} y={base}>Projection</text>
          <text x={data.prev.x} y={base + 2}>{data.prev.time}</text>
        </g>
        <text x={data.cur.x} y={base}>{data.cur.time}</text>
        {data.next && <text x="232" y={base + 2}>{data.next}</text>}
      </svg>
      <div
        className={`absolute top-[23px] w-[48px] border border-[#606060] py-px text-center text-[13px] leading-4 font-bold text-[#404040] ${
          data.narrow ? "left-5" : "left-[49px]"
        }`}
      >
        {data.target}
        <br />
        target
        <br />
        (2x)
      </div>
      <div className="absolute top-[23px] left-1 flex w-6 flex-col items-center">
        <button aria-label="Expand" className="h-6 w-6 bg-[#5f5f5f]">
          <svg viewBox="0 0 24 24" fill="none" aria-hidden="true">
            <path d="M8 4L15 12L8 20" stroke="#d8d8d8" strokeWidth="4" />
            <path d="M15 12L8 20" stroke="#fff" strokeWidth="4" />
          </svg>
        </button>
        <BarsIcon className="mt-2.5 h-[22px] w-[22px]" />
        <RobotIcon className="mt-1.5 h-[22px] w-[22px]" ears />
        <span className="mt-1 h-[17px] w-[17px] rounded-full bg-[#00ff00]" />
      </div>
      {data.buy && (
        <div
          className={`absolute top-0 right-[3px] border border-[#606060] bg-white text-[13px] leading-4 font-bold whitespace-nowrap ${
            data.buyBlue ? "text-[#0000ff]" : "text-[#ff0000]"
          }`}
        >
          {data.buy[0]}
          <br />
          {data.buy[1]}
        </div>
      )}
      {data.sell && (
        <div className="absolute right-[3px] bottom-0 border border-[#606060] bg-white text-[13px] leading-4 font-bold whitespace-nowrap text-[#ff0000]">
          {data.sell[0]}
          <br />
          {data.sell[1]}
        </div>
      )}
    </section>
  );
}

function ProfitWindow() {
  return (
    <section className="absolute top-0 right-3.5 z-20 h-[450px] w-[450px] bg-[#1e1e1e] font-['Open_Sans',sans-serif] text-[12px] text-white">
      <div className="flex h-[26px] justify-end">
        <button aria-label="Close" className="h-6 w-6 bg-[#ff4d4d] pt-1 text-[13px] leading-none font-bold">
          x
        </button>
      </div>
      <table className="w-full table-fixed">
        <colgroup>
          <col />
          <col className="w-[58px]" />
          <col className="w-[132px]" />
        </colgroup>
        <thead>
          <tr className="h-6 bg-white text-black">
            <th className="border-r border-[#e0e0e0] pl-[7px] text-left font-normal">Symbol</th>
            <th className="border-r border-[#e0e0e0] pr-1 text-right font-normal">Position</th>
            <th className="pr-[7px] text-right font-normal">P&amp;L</th>
          </tr>
        </thead>
        <tbody>
          {POSITIONS.map(([symbol, position, profit]) => (
            <tr key={symbol} className="h-[21px]">
              <td className="pl-[7px]">{symbol}</td>
              <td className={`pr-1.5 text-right ${position === "0" ? "text-[#666]" : ""}`}>{position}</td>
              <td className="pr-[7px] text-right text-[#33cc33]">{profit}</td>
            </tr>
          ))}
          <tr className="h-[21px]">
            <td className="pr-0.5 pl-[7px]">
              <hr className="mt-2.5 border-[#808080]" />
            </td>
            <td />
            <td />
          </tr>
          <tr className="h-[21px] font-bold text-[#33cc33]">
            <td className="pl-[7px]">REALIZED</td>
            <td />
            <td className="pr-[7px] text-right">$5,262.35</td>
          </tr>
          <tr className="h-[21px] font-bold text-[#ff4d4d]">
            <td className="pl-[7px]">UNREALIZED</td>
            <td />
            <td className="pr-[7px] text-right">-$337.50</td>
          </tr>
          <tr className="h-[21px] font-bold text-[#ffa500]">
            <td className="pl-[7px]">COMMISSION</td>
            <td />
            <td className="pr-[7px] text-right">$68.00</td>
          </tr>
          <tr className="h-[21px] text-[14px] leading-5 font-bold text-[#33cc33]">
            <td className="pl-[7px]">TOTAL</td>
            <td />
            <td className="pr-[7px] text-right">$4,992.85</td>
          </tr>
        </tbody>
      </table>
    </section>
  );
}

function OpenBadge() {
  return (
    <svg className="h-4 w-4 shrink-0" viewBox="0 0 16 16" aria-hidden="true">
      <circle cx="8" cy="8" r="8" fill="#0a8040" />
      <rect x="3" y="4" width="10" height="1" fill="#a8d8bc" />
      <rect x="3" y="11" width="10" height="1" fill="#a8d8bc" />
      <path d="M3 8h10" stroke="#fff" strokeWidth="3.500" strokeDasharray="1.600 0.900" />
    </svg>
  );
}

function OrdersWindow() {
  const [source, setSource] = useState("Broker");
  const radio = "h-3 w-3 appearance-none rounded-full border-4 border-white bg-white checked:bg-black";
  const head = "h-[27px] border-r-2 border-b-2 border-[#808080] bg-[#f0f0f0] text-[15px] font-bold";
  const cell = "border-r border-[#f0f0f0]";
  return (
    <section className="min-w-0 flex-1 overflow-hidden rounded-t-md border-r-[3px] border-b-2 border-l-2 border-[#2a2d38] bg-[#e0e0e0] pb-0.5">
      <div className="flex h-[25px] items-center bg-gradient-to-b from-[#868a94] via-[#4a4d58] to-[#22242e] font-['Liberation_Sans',sans-serif] text-[14px] text-white">
        <FaCog className="mr-[3px] h-4 w-4 shrink-0 text-[#4a6cf5]" />
        <span className="whitespace-nowrap">Orders Management (1925 orders) - Last: 03:06:43 (+1 new)</span>
        <div className="mt-2.5 ml-auto flex h-[15px] items-center gap-9 bg-[#3a3a3e] pr-6 font-['Open_Sans',sans-serif] text-[11px] whitespace-nowrap">
          {["Broker", "Paper - PR"].map((name) => (
            <label key={name} className="flex items-center gap-1.5">
              <input type="radio" name="source" className={radio} checked={source === name} onChange={() => setSource(name)} />
              {name}
            </label>
          ))}
        </div>
        <button className="mt-1 flex h-[15px] w-8 items-center justify-center border border-[#888] bg-gradient-to-r from-[#00c000] to-white text-[11px] leading-none text-[#806000]">
          . . .
        </button>
        <div className="ml-11 flex gap-[3px] pr-1">
          <button aria-label="Minimize" className="flex h-4 w-[29px] items-end justify-center border border-[#b0b0b0] bg-[#50535c] pb-[3px]">
            <span className="h-[3px] w-3 bg-white" />
          </button>
          <button aria-label="Maximize" className="flex h-4 w-[29px] items-center justify-center border border-[#b0b0b0] bg-[#50535c]">
            <span className="h-2 w-3 border-2 border-white" />
          </button>
          <RedClose className="h-4 w-[29px]" />
        </div>
      </div>
      <div className="flex px-1 pt-[5px]">
        <table className="w-full min-w-0 flex-1 table-fixed border-collapse bg-white text-center font-['Roboto',sans-serif] text-[14px] font-bold text-[#00b800]">
          <colgroup>
            <col className="w-[18.9%]" />
            <col className="w-[11.3%]" />
            <col className="w-[12.8%]" />
            <col className="w-[15.7%]" />
            <col className="w-[17.2%]" />
            <col className="w-[13.8%]" />
            <col className="w-[10.3%]" />
          </colgroup>
          <thead className="text-black">
            <tr>
              <th className={`${head} pl-1.5 text-left`}>#Order</th>
              <th className={head}>Ticker</th>
              <th className={head}>Status</th>
              <th className={head}>Time</th>
              <th className={head}>Origin</th>
              <th className={head}>Qt.</th>
              <th className={`${head} pr-1 text-right`}>Price</th>
            </tr>
          </thead>
          <tbody>
            {ORDERS.map(([side, id, ticker, time, origin, qty, price]) => {
              const tone = side === "BUY" ? "text-[#008000]" : "text-[#ff7f50]";
              return (
                <tr key={id} className="h-6 border-b border-[#f0f0f0] leading-[23px] whitespace-nowrap">
                  <td className={`${cell} ${tone} pl-0.5`}>
                    <div className="flex">
                      <OpenBadge />
                      <span className="ml-0.5 whitespace-pre">
                        {side}:{"   "}{id}
                      </span>
                    </div>
                  </td>
                  <td className={cell}>{ticker}</td>
                  <td className={cell}>Opened</td>
                  <td className={cell}>{time}</td>
                  <td className={cell}>{origin}</td>
                  <td className={`${cell} ${tone} whitespace-pre`}>
                    {side}:{"   "}{qty}
                  </td>
                  <td className={`${cell} pr-1.5 text-right`}>{price}</td>
                </tr>
              );
            })}
          </tbody>
        </table>
        <div className="flex w-[17px] flex-col items-center justify-between bg-[#f0f0f0] py-1">
          <div className="flex w-full flex-col items-center gap-1">
            <svg className="h-3 w-2.5" viewBox="0 0 10 12" fill="none" stroke="#505050" strokeWidth="2" aria-hidden="true">
              <path d="M1 8L5 4L9 8" />
            </svg>
            <div className="h-[17px] w-[15px] bg-[#cdcdcd]" />
          </div>
          <svg className="h-3 w-2.5" viewBox="0 0 10 12" fill="none" stroke="#505050" strokeWidth="2" aria-hidden="true">
            <path d="M1 4L5 8L9 4" />
          </svg>
        </div>
      </div>
    </section>
  );
}

export default function App() {
  return (
    <div className="flex h-screen flex-col overflow-hidden bg-black">
      <TopBar />
      <main className="relative grid min-h-0 flex-1 grid-cols-[967fr_956fr]">
        <div className="flex min-w-0 flex-col">
          <Manager />
          <div className="grid min-h-0 flex-1 grid-cols-2 gap-[3px] pr-[3px] pl-[7px]">
            <ChartWindow chart={CHARTS.mnq} tucked />
            <ChartWindow chart={CHARTS.mes} tucked />
          </div>
          <div className="grid h-[225px] shrink-0 grid-cols-2 gap-[3px] pt-0.5 pr-[3px] pb-[5px] pl-[7px]">
            <Projection data={PROJECTIONS.mnq} />
            <Projection data={PROJECTIONS.mes} />
          </div>
        </div>
        <div className="flex min-w-0 flex-col border-r-4 border-[#4c5a4c]">
          <div className="grid min-h-0 flex-1 grid-cols-[333fr_333fr_280fr] gap-[3px]">
            <ChartWindow chart={CHARTS.mgc} />
            <ChartWindow chart={CHARTS.mcl} />
            <ChartWindow chart={CHARTS.mbt} />
          </div>
          <div className="flex shrink-0 pt-px">
            <div className="grid w-[146px] pt-px pb-[5px]">
              <Projection data={PROJECTIONS.mgc} />
            </div>
            <OrdersWindow />
          </div>
        </div>
        <ProfitWindow />
      </main>
    </div>
  );
}
